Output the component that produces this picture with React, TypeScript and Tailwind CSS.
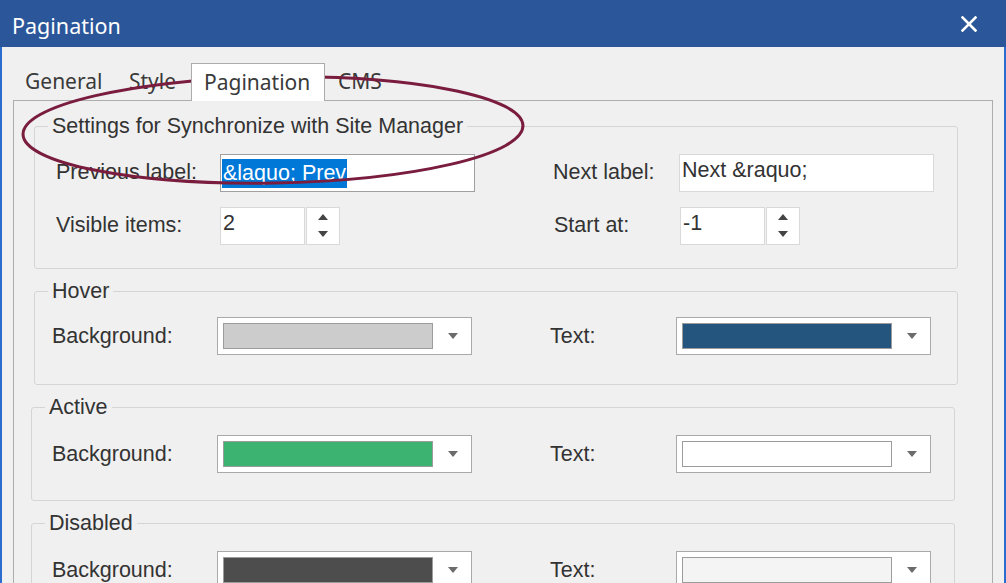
import React from "react";

const LABEL = "font-['Liberation_Sans',Arial,sans-serif] text-[21.5px] text-[#333333]";

function Group({
  title,
  className,
  children,
}: {
  title: string;
  className: string;
  children: React.ReactNode;
}) {
  return (
    <div className={`relative border border-[#d5d5d5] rounded-[3px] ${className}`}>
      <span className={`absolute left-[13px] top-[-12px] px-[4px] bg-[#f0f0f0] leading-[22px] ${LABEL}`}>
        {title}
      </span>
      {children}
    </div>
  );
}

function Arrow() {
  return (
    <svg width="10" height="6" viewBox="0 0 10 6" className="block">
      <path d="M0 0 L10 0 L5 6 Z" fill="#6b6b6b" />
    </svg>
  );
}

function ColorCombo({ color }: { color: string }) {
  return (
    <div className="w-[255px] h-[38px] border border-[#a9a9a9] bg-white flex items-center pl-[5px]">
      <div className="w-[210px] h-[26px] border border-[#9c9c9c]" style={{ backgroundColor: color }} />
      <div className="flex-1 flex justify-center pl-[2px]">
        <Arrow />
      </div>
    </div>
  );
}

function Spin({ value }: { value: string }) {
  return (
    <div className="flex gap-[1px]">
      <div className={`w-[85px] h-[38px] border border-[#d9d9d9] bg-white pl-[2px] pt-[1px] leading-[29px] ${LABEL}`}>
        {value}
      </div>
      <div className="w-[34px] h-[38px] border border-[#d9d9d9] bg-white flex flex-col items-center justify-center gap-[11px]">
        <svg width="10" height="6" viewBox="0 0 10 6" className="block">
          <path d="M5 0 L10 6 L0 6 Z" fill="#444444" />
        </svg>
        <svg width="10" height="6" viewBox="0 0 10 6" className="block">
          <path d="M0 0 L10 0 L5 6 Z" fill="#444444" />
        </svg>
      </div>
    </div>
  );
}

function ColorRow({ bg, text }: { bg: string; text: string }) {
  return (
    <div className="flex items-center">
      <div className={`w-[165px] ${LABEL}`}>Background:</div>
      <ColorCombo color={bg} />
      <div className={`ml-[78px] w-[126px] ${LABEL}`}>Text:</div>
      <ColorCombo color={text} />
    </div>
  );
}

export default function App() {
  return (
    <div className="relative w-[1006px] h-[583px] overflow-hidden bg-[#f0f0f0] flex flex-col">
      {/* Title bar */}
      <div className="h-[47px] shrink-0 bg-[#2b579a] flex items-center justify-between pl-[12px] pr-[29px]">
        <span className="font-['Noto_Sans',sans-serif] text-[21.5px] text-white leading-none pt-[4px]">
          Pagination
        </span>
        <svg width="16" height="16" viewBox="0 0 16 16" className="block">
          <path d="M1.5 1.5 L14.5 14.5 M14.5 1.5 L1.5 14.5" stroke="white" strokeWidth="2.6" strokeLinecap="square" />
        </svg>
      </div>

      {/* Body */}
      <div className="flex-1 flex flex-col border-x-2 border-[#2b6dcf] px-[11px] pt-[16px]">
        {/* Tabs */}
        <div className="flex h-[37px] font-['Noto_Sans',sans-serif] text-[21px] text-[#3a3a3a]">
          <div className="w-[104px] pl-[12px] flex items-center">General</div>
          <div className="w-[74px] pl-[12px] flex items-center">Style</div>
          <div className="relative z-10 w-[134px] h-[38px] pl-[12px] flex items-center bg-white border border-b-0 border-[#acacac]">
            Pagination
          </div>
          <div className="w-[70px] pl-[13px] flex items-center">CMS</div>
        </div>

        {/* Panel */}
        <div className="flex-1 border border-[#adadad] bg-[#f0f0f0] pt-[25px] flex flex-col gap-[22px]">
          <Group title="Settings for Synchronize with Site Manager" className="ml-[20px] w-[924px] shrink-0 pl-[21px] pt-[27px] pb-[24px]">
            <div className="flex flex-col gap-[16px]">
              <div className="flex items-center h-[37px]">
                <div className={`w-[164px] -mt-[1px] ${LABEL}`}>Previous label:</div>
                <div className={`w-[255px] h-[38px] border border-[#a0a0a0] bg-white pl-[1px] pt-[2px] ${LABEL}`}>
                  <span className="inline-block bg-[#0078d7] text-white leading-[29px] pl-[1px] pr-[1px]">
                    &amp;laquo; Prev
                  </span>
                </div>
                <div className={`ml-[78px] w-[126px] -mt-[1px] ${LABEL}`}>Next label:</div>
                <div className={`w-[255px] h-[38px] border border-[#d9d9d9] bg-white pl-[2px] pt-[1px] leading-[29px] ${LABEL}`}>
                  Next &amp;raquo;
                </div>
              </div>
              <div className="flex items-center h-[37px]">
                <div className={`w-[164px] -mt-[1px] ${LABEL}`}>Visible items:</div>
                <Spin value="2" />
                <div className={`ml-[214px] w-[126px] -mt-[1px] ${LABEL}`}>Start at:</div>
                <Spin value="-1" />
              </div>
            </div>
          </Group>

          <Group title="Hover" className="ml-[20px] w-[924px] shrink-0 pl-[17px] pt-[25px] pb-[29px]">
            <ColorRow bg="#cccccc" text="#24557e" />
          </Group>

          <Group title="Active" className="ml-[17px] w-[924px] shrink-0 pl-[20px] pt-[27px] pb-[27px]">
            <ColorRow bg="#3cb371" text="#ffffff" />
          </Group>

          <Group title="Disabled" className="ml-[17px] w-[924px] shrink-0 pl-[20px] pt-[27px] pb-[27px]">
            <ColorRow bg="#4d4d4d" text="#f4f4f4" />
          </Group>
        </div>
      </div>

      {/* Annotation ellipse */}
      <svg className="absolute inset-0 pointer-events-none" width="1006" height="583" viewBox="0 0 1006 583">
        <ellipse
          cx="273"
          cy="130"
          rx="250"
          ry="53"
          transform="rotate(-1 273 130)"
          fill="none"
          stroke="#7a1c3e"
          strokeWidth="3"
        />
      </svg>
    </div>
  );
}
